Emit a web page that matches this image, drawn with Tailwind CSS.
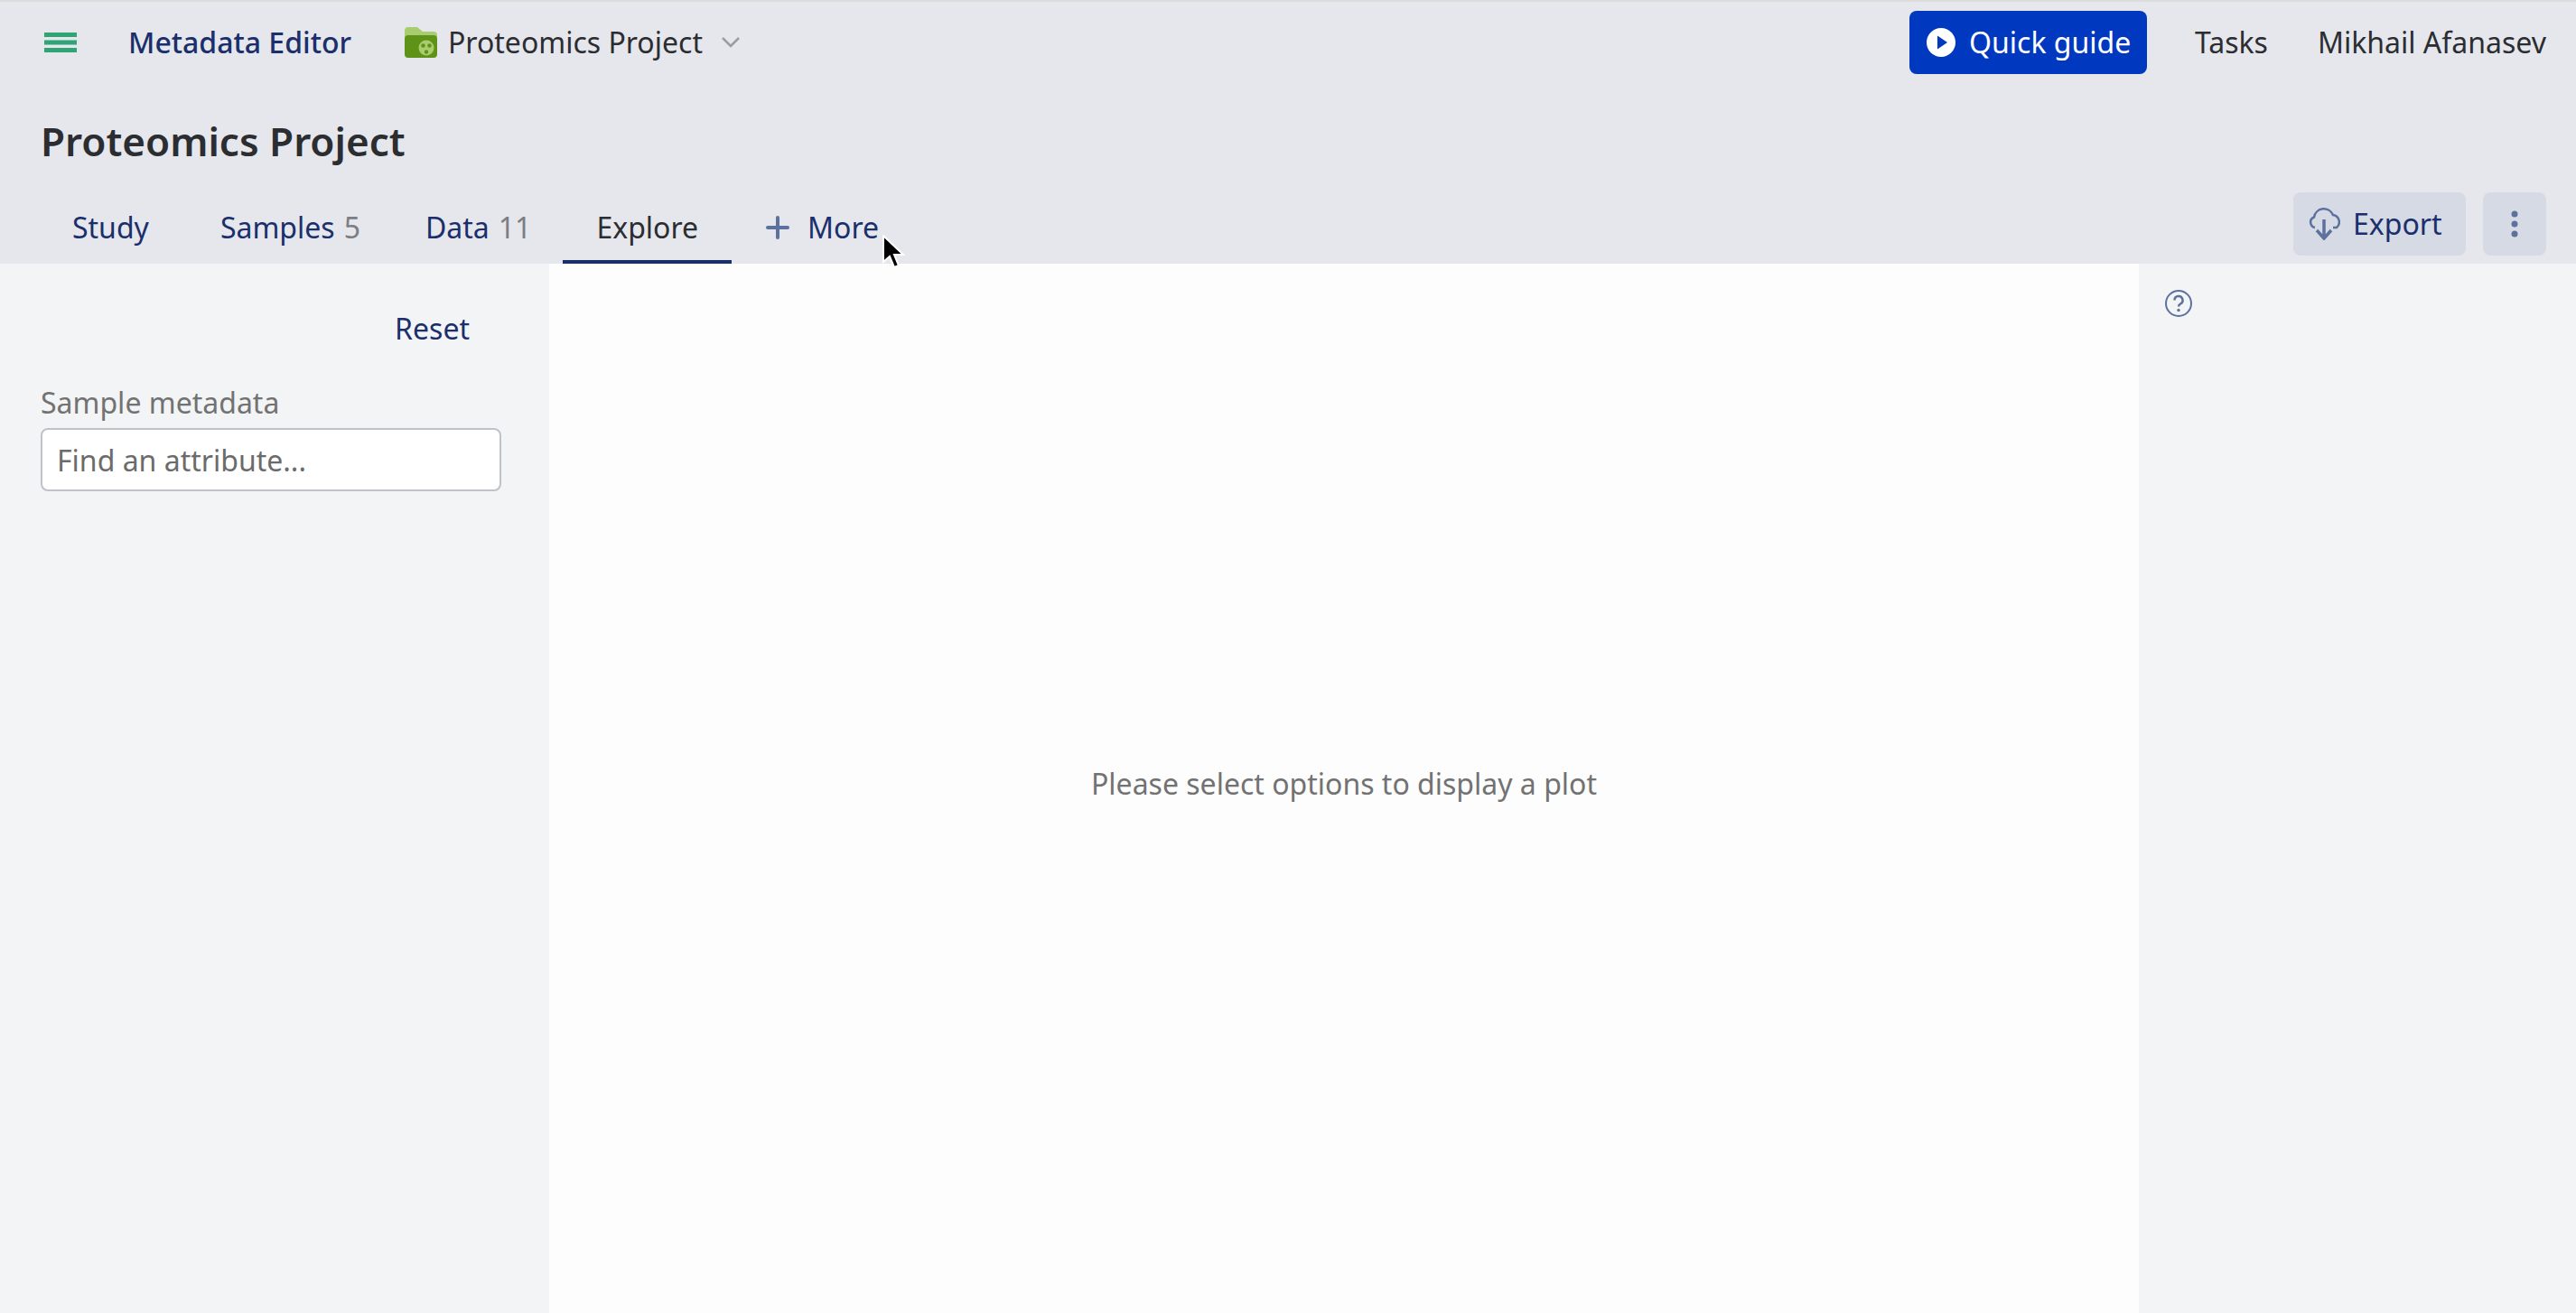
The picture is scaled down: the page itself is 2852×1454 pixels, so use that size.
<!DOCTYPE html>
<html lang="en">
<head>
  <meta charset="UTF-8" />
  <title>Metadata Editor - Explore</title>
  <script src="https://cdn.jsdelivr.net/npm/@tailwindcss/browser@4"></script>
</head>
<body class="relative h-screen overflow-hidden flex flex-col bg-[#fdfdfd] text-[32px] leading-[40px] text-[#2b2d31] font-['Noto_Sans','Liberation_Sans',sans-serif]">

  <!-- Header -->
  <header class="bg-[#e5e7ec] border-t-2 border-[#dcdcdc] shrink-0">
    <nav class="h-[90px] flex items-center pl-[49px] pr-[33px]">
      <svg class="w-[36px] h-[22px]" viewBox="0 0 36 22" fill="#2fa576"><rect width="36" height="5"/><rect y="8.5" width="36" height="5"/><rect y="17" width="36" height="5"/></svg>
      <a class="ml-[57px] font-medium text-[#1a2f6b]">Metadata Editor</a>
      <svg class="ml-[59px] w-[36px] h-[34px]" viewBox="0 0 36 34">
        <path d="M0 4a4 4 0 0 1 4-4h10l6 5h12a4 4 0 0 1 4 4v8H0z" fill="#a9cd6e"/>
        <path d="M0 13a4 4 0 0 1 4-4h28a4 4 0 0 1 4 4v17a4 4 0 0 1-4 4H4a4 4 0 0 1-4-4z" fill="#5f9318"/>
        <circle cx="24" cy="23" r="8.5" fill="#a9cd6e"/>
        <circle cx="20.5" cy="20.5" r="2.2" fill="#5f9318"/><circle cx="27.5" cy="20.5" r="2.2" fill="#5f9318"/><circle cx="24" cy="27.5" r="2.2" fill="#5f9318"/>
      </svg>
      <span class="ml-[12px]">Proteomics Project</span>
      <svg class="ml-[21px] w-[20px] h-[12px]" viewBox="0 0 20 12" fill="none" stroke="#9a9ca3" stroke-width="2.5"><path d="M1 1l9 9 9-9"/></svg>

      <button class="ml-auto h-[70px] w-[263px] flex items-center pl-[19px] bg-[#0039c0] rounded-[8px] text-white">
        <svg class="w-[32px] h-[32px]" viewBox="0 0 32 32"><circle cx="16" cy="16" r="16" fill="#fff"/><path d="M12 8.5l11 7.5-11 7.5z" fill="#0039c0"/></svg>
        <span class="ml-[15px]">Quick guide</span>
      </button>
      <a class="ml-[53px]">Tasks</a>
      <a class="ml-[55px]">Mikhail Afanasev</a>
    </nav>

    <h1 class="h-[120px] pl-[45px] pt-[36px] text-[44px] leading-[56px] font-semibold">Proteomics Project</h1>

    <div class="h-[80px] flex pl-[43px] pr-[33px] text-[#1a2f6b]">
      <a class="h-full flex items-center px-[37px]">Study</a>
      <a class="ml-[5px] h-full flex items-center px-[37px]">Samples<span class="ml-[10px] text-[#7c7e84]">5</span></a>
      <a class="h-full flex items-center px-[35px]">Data<span class="ml-[10px] text-[#7c7e84]">11</span></a>
      <a class="h-full flex items-center px-[37px] text-[#2b2d31] border-b-4 border-[#1a2f6b] pt-[4px]">Explore</a>
      <a class="h-full flex items-center pl-[38px]">
        <svg class="w-[26px] h-[26px]" viewBox="0 0 26 26" stroke="#5d719e" stroke-width="4" stroke-linecap="round"><path d="M13 2v22M2 13h22"/></svg>
        <span class="ml-[20px]">More</span>
      </a>
      <button class="ml-auto mt-px h-[70px] w-[191px] flex items-center pl-[16px] bg-[#d6dae4] rounded-[8px]">
        <svg class="w-[36px] h-[36px]" viewBox="0 0 36 36" fill="none" stroke="#5d719e" stroke-width="2.5">
          <path d="M8 22a6 6 0 0 1-1-11.500A11 11 0 0 1 28 8a8 8 0 0 1 4 14h-4"/>
          <path d="M18 13v20M10 25l8 9 8-9" stroke-width="3.500"/>
        </svg>
        <span class="ml-[14px]">Export</span>
      </button>
      <button class="ml-[19px] mt-px h-[70px] w-[70px] flex items-center justify-center bg-[#d6dae4] rounded-[8px]">
        <svg class="w-[8px] h-[30px]" viewBox="0 0 8 30" fill="#5d719e"><circle cx="4" cy="4" r="3.500"/><circle cx="4" cy="15" r="3.500"/><circle cx="4" cy="26" r="3.500"/></svg>
      </button>
    </div>
  </header>

  <!-- Body -->
  <main class="flex-1 flex min-h-0">
    <aside class="w-[608px] shrink-0 bg-[#f3f4f5] pl-[45px] pr-[53px]">
      <div class="pt-[52px] pr-[35px] text-right text-[#1a2f6b]">Reset</div>
      <label class="block mt-[42px] text-[#727272]">Sample metadata</label>
      <input class="block mt-[8px] w-full h-[70px] px-[16px] bg-white border-2 border-[#c0c1c9] rounded-[8px] placeholder-[#6b6b6b]" placeholder="Find an attribute..." />
    </aside>
    <section class="flex-1 flex items-center justify-center pb-[10px] text-[#727272]">Please select options to display a plot</section>
    <aside class="w-[484px] shrink-0 bg-[#f3f4f5] pl-[29px] pt-[29px]">
      <svg class="w-[30px] h-[30px]" viewBox="0 0 30 30" fill="none" stroke="#5d719e" stroke-width="2"><circle cx="15" cy="15" r="14"/><path d="M10.500 11.500a4.500 4.500 0 1 1 6.500 4c-1.300.8-2 1.500-2 3" stroke-width="2.500"/><circle cx="15" cy="22.500" r="1.700" fill="#5d719e" stroke="none"/></svg>
    </aside>
  </main>

  <!-- Mouse pointer -->
  <svg class="absolute left-[976px] top-[260px] w-[26px] h-[38px]" viewBox="0 0 26 38"><path d="M2 1v29l7-6 5 12 5-2-5-12h10z" stroke="#fff" stroke-width="2"/></svg>
</body>
</html>
